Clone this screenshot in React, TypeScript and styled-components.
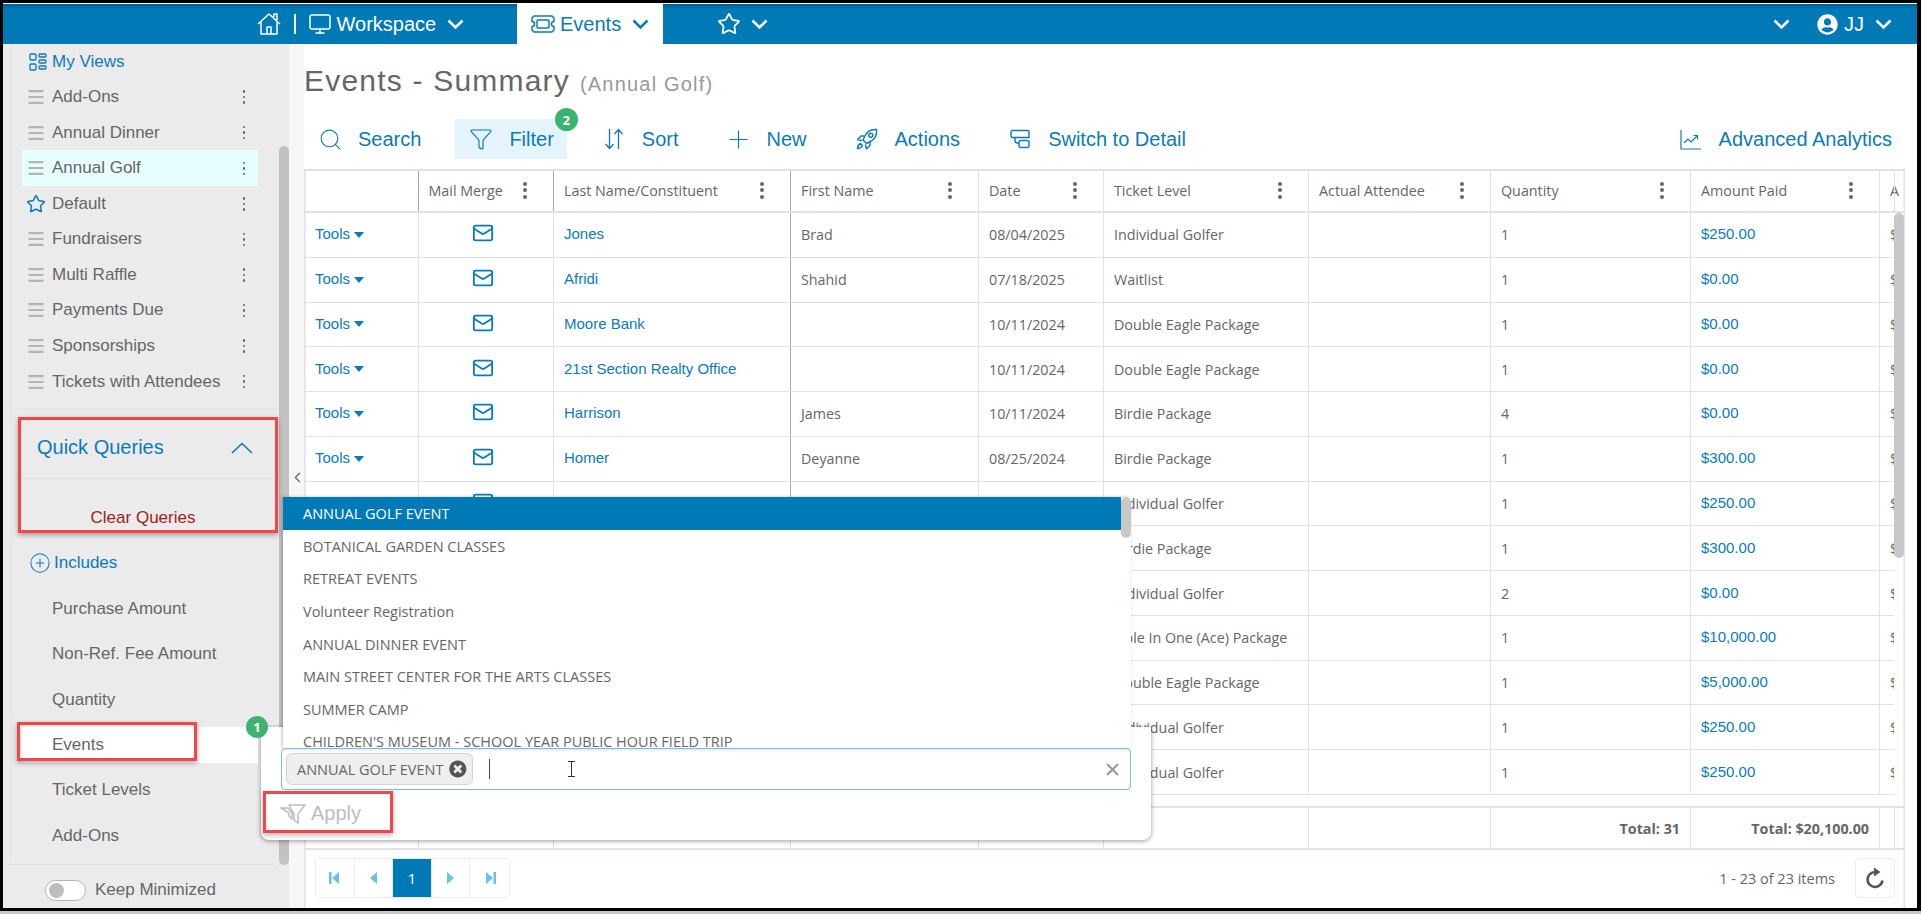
import React from 'react'
import styled, { createGlobalStyle } from 'styled-components'
import { Monitor, ChevronLeft, Star, Search, Funnel, Plus, Mail, X, CirclePlus, Menu } from 'lucide-react'
import { FaUserCircle, FaTimesCircle } from 'react-icons/fa'

const BLUE = '#0a7bb8'
const GRID = '#e1e2e8'
const COLUMNS = '113.5px 135.5px 237px 188px 125px 205px 182px 200px 189px 15px 1fr'

const GlobalStyle = createGlobalStyle`
  html, body { margin: 0; padding: 0; background: #fff; }
  * { box-sizing: border-box; }
  body { font-family: "Liberation Sans", Arial, sans-serif; color: #666; }
`

const Frame = styled('div')`
  background: #c8c8c8;
  height: 914px;
  padding-bottom: 3px;
  width: 1921px;
`

const Screen = styled('div')`
  background: #fff;
  border-bottom: 3px solid #000;
  border-left: 3px solid #000;
  border-right: 4px solid #000;
  border-top: 3px solid #000;
  display: flex;
  flex-direction: column;
  height: 911px;
  overflow: hidden;
  padding-top: 1px;
`

const TopBar = styled('header')`
  align-items: stretch;
  background: #007ab7;
  box-shadow: inset 0 4px 4px -3px rgba(0, 0, 0, .4);
  color: #fff;
  display: flex;
  flex: none;
  font-size: 20px;
  height: 40px;
`

const TopLeft = styled('div')`
  align-items: center;
  display: flex;
  padding-left: 254px;
  width: 514px;
`

const Divider = styled('span')`
  background: #fff;
  height: 20px;
  margin: 0 12px 0 13px;
  width: 1.5px;
`

const TopLabel = styled('span')`
  margin: 0 11px 0 5px;
`

const EventsTab = styled('div')`
  align-items: center;
  background: #fff;
  color: ${BLUE};
  display: flex;
  padding-left: 14px;
  width: 146px;
`

const FavGroup = styled('div')`
  align-items: center;
  display: flex;
  gap: 10px;
  margin-left: 54px;
`

const UserGroup = styled('div')`
  align-items: center;
  display: flex;
  margin-left: auto;
  padding-right: 25px;
`

const UserIcon = styled('span')`
  display: flex;
  margin-left: 27px;
`

const UserName = styled('span')`
  margin: 0 11px 0 6px;
`

const Body = styled('div')`
  display: flex;
  flex: 1;
  min-height: 0;
  position: relative;
`

const Sidebar = styled('aside')`
  background: #ebebeb;
  display: flex;
  flex-direction: column;
  flex: none;
  font-size: 17px;
  padding-left: 8px;
  position: relative;
  width: 276px;
`

const SideBorder = styled('div')`
  border-left: 1px solid #e2e2e2;
  height: 816px;
  padding-left: 10px;
`

const MyViews = styled('div')`
  align-items: center;
  color: ${BLUE};
  display: flex;
  font-size: 17px;
  gap: 5px;
  height: 34px;
  padding: 1px 0 0 7px;
`

const ViewsList = styled('div')`
  margin: 0 0 0 -11px;
  border-bottom: 1px solid #e2e2e2;
  padding: 1.4px 0 9.6px 11px;
`

const ViewRow = styled('div')<{ $active?: boolean }>`
  align-items: center;
  background: ${(props) => (props.$active ? '#e6ffff' : 'transparent')};
  display: flex;
  height: 35.56px;
  padding-left: 4px;
  width: 236px;
`

const RowLabel = styled('span')`
  flex: 1;
  margin-left: 6px;
  white-space: nowrap;
`

const DotsWrap = styled('span')`
  color: #666;
  display: flex;
  flex-direction: column;
  gap: 3px;
  margin-right: 13px;
`

const Dot = styled('i')<{ $size: number }>`
  background: currentColor;
  border-radius: 50%;
  display: block;
  height: ${(props) => props.$size}px;
  width: ${(props) => props.$size}px;
`

const HeadDots = styled(DotsWrap)`
  gap: 2.5px;
  margin: 0;
`

const QuickBox = styled('section')`
  border: 3px solid #f44649;
  box-shadow: 0 2px 5px rgba(0, 0, 0, .35);
  height: 116px;
  margin: 7px 0 0 -4px;
  width: 260px;
`

const QuickHead = styled('div')`
  align-items: center;
  border-bottom: 1px solid #e2e2e2;
  color: ${BLUE};
  display: flex;
  font-size: 20px;
  height: 59px;
  justify-content: space-between;
  padding: 0 22px 2px 16px;
`

const ClearQueries = styled('div')`
  color: #a01d22;
  margin-top: 29px;
  padding-right: 10px;
  text-align: center;
`

const Includes = styled('div')`
  align-items: center;
  color: ${BLUE};
  display: flex;
  font-size: 17px;
  gap: 3px;
  height: 40px;
  margin: 10px 0 8px;
  padding-left: 7px;
`

const QueryRow = styled('div')<{ $active?: boolean }>`
  align-items: center;
  background: ${(props) => (props.$active ? '#fff' : 'transparent')};
  display: flex;
  height: 36px;
  margin-bottom: 9.4px;
  padding-left: 30px;
  position: relative;
  width: 236px;
`

const EventsMark = styled('div')`
  border: 3px solid #f44649;
  box-shadow: 0 2px 5px rgba(0, 0, 0, .35);
  height: 39px;
  left: -5px;
  position: absolute;
  top: -5px;
  width: 180px;
`

const SideFooter = styled('div')`
  align-items: center;
  border-top: 1px solid #dedede;
  display: flex;
  flex: 1;
  gap: 9px;
  margin: 4px 5px 0 -3px;
  padding: 7px 0 0 37px;
`

const Toggle = styled('span')`
  align-items: center;
  background: #fff;
  border: 1px solid #b5b5b5;
  border-radius: 11px;
  display: flex;
  height: 21px;
  padding-left: 3px;
  width: 41px;
`

const Knob = styled('span')`
  background: #bdbdbd;
  border-radius: 50%;
  height: 15px;
  width: 15px;
`

const ScrollCol = styled('div')`
  background: #ebebeb;
  flex: none;
  padding-top: 102px;
  width: 10px;
`

const ScrollThumb = styled('div')<{ $height: number }>`
  background: #c2c2c2;
  border-radius: 5px;
  height: ${(props) => props.$height}px;
  width: 100%;
`

const Gutter = styled('div')`
  background: #f7f7f7;
  color: #666;
  flex: none;
  padding-top: 425px;
  width: 15px;
`

const Main = styled('main')`
  display: flex;
  flex: 1;
  flex-direction: column;
  min-width: 0;
  padding-right: 12px;
`

const TitleRow = styled('div')`
  align-items: baseline;
  display: flex;
  gap: 10px;
  height: 75px;
  padding-top: 20px;
`

const Title = styled('h1')`
  color: #666;
  font-size: 30px;
  font-weight: 400;
  letter-spacing: 1.2px;
  margin: 0;
`

const SubTitle = styled('span')`
  color: #999;
  font-size: 20px;
  letter-spacing: 1.2px;
`

const Toolbar = styled('div')`
  align-items: center;
  display: flex;
  gap: 21px;
  height: 40px;
`

const ToolButton = styled('div')<{ $active?: boolean; $end?: boolean }>`
  align-items: center;
  background: ${(props) => (props.$active ? '#e5f4fc' : 'transparent')};
  color: ${BLUE};
  display: flex;
  font-size: 20px;
  gap: 18px;
  height: 40px;
  margin-left: ${(props) => (props.$end ? 'auto' : '0')};
  padding: 0 13px 0 16px;
  position: relative;
  white-space: nowrap;
`

const ToolIcon = styled('span')`
  align-items: center;
  display: flex;
  height: 24px;
  justify-content: center;
  width: 20px;
  svg { flex: none; }
`

const Badge = styled('span')`
  align-items: center;
  background: #3cb371;
  border-radius: 50%;
  color: #fff;
  display: flex;
  font-family: "Open Sans", sans-serif;
  font-size: 13px;
  font-weight: 700;
  height: 23px;
  justify-content: center;
  position: absolute;
  width: 23px;
`

const FilterBadge = styled(Badge)`
  right: -11px;
  top: -11px;
`

const TableShell = styled('div')`
  box-shadow: inset 1.5px 0 0 ${GRID}, inset -1.5px 0 0 ${GRID};
  display: flex;
  flex: 1;
  flex-direction: column;
  margin-top: 10px;
`

const TableBox = styled('div')`
  border-top: 2px solid ${GRID};
  color: #666;
  display: flex;
  flex-direction: column;
  font-family: "Open Sans", sans-serif;
  font-size: 14.3px;
  height: 679px;
`

const HeadRow = styled('div')`
  border-bottom: 2px solid ${GRID};
  display: grid;
  flex: none;
  grid-template-columns: ${COLUMNS};
  height: 42px;
`

const HeadCell = styled('div')<{ $dark?: boolean }>`
  align-items: center;
  border-left: ${(props) => (props.$dark ? '1.5px solid #a9a9a9' : `1.5px solid ${GRID}`)};
  display: flex;
  justify-content: space-between;
  overflow: hidden;
  padding: 0 26px 2px 10px;
  white-space: nowrap;
`

const EndCell = styled('div')`
  border-left: 1.5px solid ${GRID};
`

const RowsArea = styled('div')`
  flex: none;
  height: 593px;
  position: relative;
`

const DataRow = styled('div')`
  border-bottom: 1.5px solid ${GRID};
  display: grid;
  grid-template-columns: ${COLUMNS};
  height: 44.77px;
  width: 1590px;
`

const Cell = styled('div')<{ $dark?: boolean }>`
  align-items: center;
  border-left: ${(props) => (props.$dark ? '1.5px solid #a9a9a9' : `1.5px solid ${GRID}`)};
  display: flex;
  overflow: hidden;
  padding-left: 10px;
  white-space: nowrap;
`

const LinkCell = styled(Cell)`
  color: ${BLUE};
  font-family: "Liberation Sans", Arial, sans-serif;
  font-size: 15px;
  padding-bottom: 2px;
`

const MailCell = styled(Cell)`
  justify-content: center;
  padding: 0 5px 3px 0;
`

const Caret = styled('i')`
  border-left: 5px solid transparent;
  border-right: 5px solid transparent;
  border-top: 6px solid ${BLUE};
  display: inline-block;
  margin: 2px 0 0 4px;
`

const TableThumb = styled('div')`
  background: #c8c8c8;
  border-radius: 5px;
  height: 345px;
  position: absolute;
  right: 1px;
  top: 0;
  width: 10px;
`

const FootRow = styled('div')`
  border-bottom: 2px solid ${GRID};
  border-top: 2px solid ${GRID};
  display: grid;
  flex: none;
  grid-template-columns: ${COLUMNS};
  height: 44px;
`

const FootCell = styled('div')`
  align-items: center;
  border-left: 1.5px solid ${GRID};
  display: flex;
  font-weight: 700;
  justify-content: flex-end;
  padding-right: 10px;
  white-space: nowrap;
`

const PagerBar = styled('div')`
  align-items: center;
  color: #666;
  display: flex;
  flex: 1;
  font-family: "Open Sans", sans-serif;
  font-size: 14.5px;
  padding: 0 10px 0 11px;
`

const Pager = styled('div')`
  border: 1px solid #ececec;
  border-radius: 4px;
  display: flex;
  height: 40px;
`

const PageButton = styled('span')<{ $current?: boolean }>`
  align-items: center;
  background: ${(props) => (props.$current ? '#007ab7' : '#fff')};
  border-right: 1px solid #ececec;
  color: ${(props) => (props.$current ? '#fff' : '#6cc0e8')};
  display: flex;
  justify-content: center;
  width: 38.6px;
  &:last-child { border-right: none; }
`

const ItemCount = styled('span')`
  margin-left: auto;
`

const RefreshButton = styled('span')`
  align-items: center;
  border: 1px solid #ececec;
  border-radius: 4px;
  display: flex;
  height: 40px;
  justify-content: center;
  margin-left: 20px;
  width: 40px;
`

const Popup = styled('div')`
  background: #fff;
  border-radius: 0 0 8px 8px;
  box-shadow: 0 1px 5px rgba(0, 0, 0, .4);
  font-family: "Open Sans", sans-serif;
  font-size: 14.5px;
  height: 113px;
  left: 258px;
  padding: 21px 0 0 20px;
  position: absolute;
  top: 683px;
  width: 890px;
  z-index: 5;
`

const PopupBadge = styled(Badge)`
  height: 22px;
  left: -15px;
  top: -11px;
  width: 22px;
`

const DropList = styled('div')`
  background: #fff;
  box-shadow: -1px 0 3px rgba(0, 0, 0, .25);
  height: 251px;
  left: 22px;
  overflow: hidden;
  position: absolute;
  top: -230px;
  width: 848px;
`

const DropItem = styled('div')<{ $selected?: boolean }>`
  align-items: center;
  background: ${(props) => (props.$selected ? '#007ab7' : 'transparent')};
  color: ${(props) => (props.$selected ? '#fff' : '#666')};
  display: flex;
  height: 32.6px;
  padding: 1px 0 0 20px;
  width: 838px;
  white-space: nowrap;
`

const DropThumb = styled('div')`
  background: #c8c8c8;
  border-radius: 5px;
  height: 41px;
  position: absolute;
  right: 0;
  top: 0;
  width: 10px;
`

const InputBox = styled('div')`
  align-items: center;
  background: #fff;
  border: 1px solid #7db9d9;
  border-radius: 4px;
  box-shadow: inset 0 3px 3px -2px rgba(0, 0, 0, .12);
  display: flex;
  height: 42px;
  padding: 0 8px 0 4px;
  position: relative;
  width: 850px;
`

const Chip = styled('span')`
  align-items: center;
  background: #efefef;
  border: 1px solid #d4d4d4;
  border-radius: 6px;
  display: flex;
  gap: 6px;
  height: 32px;
  padding: 0 5px 0 10px;
  white-space: nowrap;
  width: 187px;
`

const TextCaret = styled('i')`
  background: #444;
  height: 20px;
  margin-left: 16px;
  width: 1px;
`

const IBeam = styled('span')`
  display: flex;
  margin-left: 77px;
`

const ClearInput = styled('span')`
  color: #999;
  display: flex;
  margin-left: auto;
`

const ApplyBox = styled('div')`
  align-items: center;
  border: 3px solid #f44649;
  box-shadow: 0 2px 5px rgba(0, 0, 0, .3);
  color: #b9bdc5;
  display: flex;
  font-family: "Liberation Sans", Arial, sans-serif;
  font-size: 20px;
  gap: 5px;
  height: 42px;
  margin: 1px 0 0 -18px;
  padding: 3px 0 0 14px;
  width: 130px;
`

const views = ['Add-Ons', 'Annual Dinner', 'Annual Golf', 'Default', 'Fundraisers', 'Multi Raffle', 'Payments Due', 'Sponsorships', 'Tickets with Attendees']
const queries = ['Purchase Amount', 'Non-Ref. Fee Amount', 'Quantity', 'Events', 'Ticket Levels', 'Add-Ons']
const headers = ['Mail Merge', 'Last Name/Constituent', 'First Name', 'Date', 'Ticket Level', 'Actual Attendee', 'Quantity', 'Amount Paid']
const options = ['ANNUAL GOLF EVENT', 'BOTANICAL GARDEN CLASSES', 'RETREAT EVENTS', 'Volunteer Registration', 'ANNUAL DINNER EVENT', 'MAIN STREET CENTER FOR THE ARTS CLASSES', 'SUMMER CAMP', "CHILDREN'S MUSEUM - SCHOOL YEAR PUBLIC HOUR FIELD TRIP"]

const rows = [
  ['Jones', 'Brad', '08/04/2025', 'Individual Golfer', '1', '$250.00'],
  ['Afridi', 'Shahid', '07/18/2025', 'Waitlist', '1', '$0.00'],
  ['Moore Bank', '', '10/11/2024', 'Double Eagle Package', '1', '$0.00'],
  ['21st Section Realty Office', '', '10/11/2024', 'Double Eagle Package', '1', '$0.00'],
  ['Harrison', 'James', '10/11/2024', 'Birdie Package', '4', '$0.00'],
  ['Homer', 'Deyanne', '08/25/2024', 'Birdie Package', '1', '$300.00'],
  ['Roberts', '', '', 'Individual Golfer', '1', '$250.00'],
  ['', '', '', 'Birdie Package', '1', '$300.00'],
  ['', '', '', 'Individual Golfer', '2', '$0.00'],
  ['', '', '', 'Hole In One (Ace) Package', '1', '$10,000.00'],
  ['', '', '', 'Double Eagle Package', '1', '$5,000.00'],
  ['', '', '', 'Individual Golfer', '1', '$250.00'],
  ['', '', '', 'Individual Golfer', '1', '$250.00'],
]

const Dots = () => (
  <DotsWrap>
    <Dot $size={2.5} />
    <Dot $size={2.5} />
    <Dot $size={2.5} />
  </DotsWrap>
)

const NavChevron = () => (
  <svg width="17" height="11" viewBox="0 0 17 11" fill="none" stroke="currentColor" strokeWidth="2.6">
    <path d="M1.500 1.500 8.500 8.500l7-7" />
  </svg>
)

const HomeIcon = () => (
  <svg width="24" height="24" viewBox="0 0 24 24" fill="none" stroke="#fff" strokeWidth="1.5" strokeLinejoin="round">
    <path d="M1 12 12 2l11 10" />
    <path d="M4 10v12h16V10" />
    <path d="M10 22v-7h4v7" />
    <path d="M17 5V2h3v6" />
  </svg>
)

const TicketIcon = () => (
  <svg width="24" height="18" viewBox="0 0 24 18" fill="none" stroke={BLUE} strokeWidth="1.5" strokeLinejoin="round">
    <path d="M3 1h18l2 2v3.500a2.500 2.500 0 0 0 0 5V15l-2 2H3l-2-2v-3.500a2.500 2.500 0 0 0 0-5V3z" />
    <rect x="6" y="5" width="12" height="8" rx="1" />
  </svg>
)

const ViewsIcon = () => (
  <svg width="18" height="18" viewBox="0 0 18 18" fill="none" stroke={BLUE} strokeWidth="1.3">
    <rect x="1" y="1" width="6" height="6" rx="1" />
    <rect x="1" y="11" width="6" height="6" rx="1" />
    <rect x="10" y="1" width="7" height="3" rx="1" />
    <rect x="10" y="7" width="7" height="3" rx="1" />
    <rect x="10" y="13" width="7" height="3" rx="1" />
  </svg>
)

const CollapseIcon = () => (
  <svg width="22" height="12" viewBox="0 0 22 12" fill="none" stroke="currentColor" strokeWidth="1.6">
    <path d="M1 11 11 1.500 21 11" />
  </svg>
)

const SortIcon = () => (
  <svg width="20" height="22" viewBox="0 0 20 22" fill="none" stroke={BLUE} strokeWidth="1.3">
    <path d="M5.500 1v19M1.500 16l4 4.500 4-4.500" />
    <path d="M14.500 21V2M10.500 6l4-4.500 4 4.500" />
  </svg>
)

const RocketIcon = () => (
  <svg width="22" height="22" viewBox="0 0 22 22" fill="none" stroke={BLUE} strokeWidth="1.4" strokeLinejoin="round">
    <path d="M20.500 1.500c-5.500-.5-9.500 2-11.500 6.500l-2 4 3.500 3.500 4-2c4.500-2 6.500-6.500 6-12z" />
    <circle cx="14.800" cy="7.200" r="2" />
    <path d="M8.500 8H5L1.500 11.500l4.500 1.200" />
    <path d="M14 14v3.500L10.500 21l-1.200-4.500" />
    <path d="M4.500 15.500c-2 1-3 3-3 5 2 0 4-1 5-3z" />
  </svg>
)

const SwitchIcon = () => (
  <svg width="20" height="20" viewBox="0 0 20 20" fill="none" stroke={BLUE} strokeWidth="1.4">
    <path d="M5 8.500H2.500a1.500 1.500 0 0 1-1.500-1.500V3a1.500 1.500 0 0 1 1.500-1.500h15A1.500 1.500 0 0 1 19 3v5.500H5z" />
    <path d="M5 8.500v3a2.500 2.500 0 0 0 2.500 2.500H9" />
    <rect x="9" y="11.500" width="10" height="7" rx="2" />
  </svg>
)

const AnalyticsIcon = () => (
  <svg width="21" height="21" viewBox="0 0 21 21" fill="none" stroke={BLUE} strokeWidth="1.2">
    <path d="M1 1v19h20" />
    <path d="M4 14l4-4 3 3 6-6" />
    <path d="M13.500 6.500h4v4" />
  </svg>
)

const ApplyIcon = () => (
  <svg width="26" height="22" viewBox="0 0 26 22" fill="none" stroke="#b9bdc5" strokeWidth="1.5" strokeLinejoin="round">
    <path d="M9 2h16l-7 9v9l-4-3v-6z" />
    <path d="M1 5h7l4 5v6l-3-3v-3z" />
  </svg>
)

const RefreshIcon = () => (
  <svg width="22" height="24" viewBox="0 0 22 24" fill="none" stroke="#555" strokeWidth="2.6">
    <path d="M11 6a7.500 7.500 0 1 0 7.500 8.500" />
    <path d="M10 1.500 16.500 6 10 10.500z" fill="#555" stroke="none" />
  </svg>
)

const PageArrow = ({ dir, edge }: { dir: 'left' | 'right'; edge?: boolean }) => (
  <svg width="12" height="14" viewBox="0 0 12 14" fill="currentColor">
    {dir === 'left' ? <path d="M10 1v12L3 7z" /> : <path d="M2 1v12l7-6z" />}
    {edge && (dir === 'left' ? <rect x="0" y="1" width="2.500" height="12" /> : <rect x="9.500" y="1" width="2.500" height="12" />)}
  </svg>
)

const IBeamIcon = () => (
  <svg width="9" height="16" viewBox="0 0 9 16" fill="none" stroke="#333" strokeWidth="1">
    <path d="M1 .5h7M4.500 .5v15M1 15.500h7" />
  </svg>
)

export default function App() {
  return (
    <Frame>
      <GlobalStyle />
      <Screen>
        <TopBar>
          <TopLeft>
            <HomeIcon />
            <Divider />
            <Monitor size={24} strokeWidth={1.5} />
            <TopLabel>Workspace</TopLabel>
            <NavChevron />
          </TopLeft>
          <EventsTab>
            <TicketIcon />
            <TopLabel>Events</TopLabel>
            <NavChevron />
          </EventsTab>
          <FavGroup>
            <Star size={24} strokeWidth={1.8} />
            <NavChevron />
          </FavGroup>
          <UserGroup>
            <NavChevron />
            <UserIcon>
              <FaUserCircle size={21} />
            </UserIcon>
            <UserName>JJ</UserName>
            <NavChevron />
          </UserGroup>
        </TopBar>
        <Body>
          <Sidebar>
            <SideBorder>
              <MyViews>
                <ViewsIcon />
                My Views
              </MyViews>
              <ViewsList>
                {views.map((name) => (
                  <ViewRow key={name} $active={name === 'Annual Golf'}>
                    {name === 'Default' ? <Star size={20} color={BLUE} strokeWidth={1.8} /> : <Menu size={20} color="#b4b4b4" strokeWidth={2.2} absoluteStrokeWidth />}
                    <RowLabel>{name}</RowLabel>
                    <Dots />
                  </ViewRow>
                ))}
              </ViewsList>
              <QuickBox>
                <QuickHead>
                  Quick Queries
                  <CollapseIcon />
                </QuickHead>
                <ClearQueries>Clear Queries</ClearQueries>
              </QuickBox>
              <Includes>
                <CirclePlus size={22} strokeWidth={1.1} />
                Includes
              </Includes>
              {queries.map((name) => (
                <QueryRow key={name} $active={name === 'Events'}>
                  {name}
                  {name === 'Events' && <EventsMark />}
                </QueryRow>
              ))}
            </SideBorder>
            <SideFooter>
              <Toggle>
                <Knob />
              </Toggle>
              Keep Minimized
            </SideFooter>
          </Sidebar>
          <ScrollCol>
            <ScrollThumb $height={719} />
          </ScrollCol>
          <Gutter>
            <ChevronLeft size={17} strokeWidth={1.7} />
          </Gutter>
          <Main>
            <TitleRow>
              <Title>Events - Summary</Title>
              <SubTitle>(Annual Golf)</SubTitle>
            </TitleRow>
            <Toolbar>
              <ToolButton>
                <ToolIcon>
                  <Search size={25} strokeWidth={1.1} />
                </ToolIcon>
                Search
              </ToolButton>
              <ToolButton $active>
                <ToolIcon>
                  <Funnel size={24} strokeWidth={1.2} />
                </ToolIcon>
                Filter
                <FilterBadge>2</FilterBadge>
              </ToolButton>
              <ToolButton>
                <ToolIcon>
                  <SortIcon />
                </ToolIcon>
                Sort
              </ToolButton>
              <ToolButton>
                <ToolIcon>
                  <Plus size={29} strokeWidth={1} />
                </ToolIcon>
                New
              </ToolButton>
              <ToolButton>
                <ToolIcon>
                  <RocketIcon />
                </ToolIcon>
                Actions
              </ToolButton>
              <ToolButton>
                <ToolIcon>
                  <SwitchIcon />
                </ToolIcon>
                Switch to Detail
              </ToolButton>
              <ToolButton $end>
                <ToolIcon>
                  <AnalyticsIcon />
                </ToolIcon>
                Advanced Analytics
              </ToolButton>
            </Toolbar>
            <TableShell>
              <TableBox>
                <HeadRow>
                  <HeadCell />
                  {headers.map((name, i) => (
                    <HeadCell key={name} $dark={i < 3}>
                      {name}
                      <HeadDots>
                        <Dot $size={4} />
                        <Dot $size={4} />
                        <Dot $size={4} />
                      </HeadDots>
                    </HeadCell>
                  ))}
                  <HeadCell>A</HeadCell>
                  <EndCell />
                </HeadRow>
                <RowsArea>
                  {rows.map((row, i) => (
                    <DataRow key={i}>
                      <LinkCell>
                        Tools
                        <Caret />
                      </LinkCell>
                      <MailCell>
                        <Mail size={22} color={BLUE} strokeWidth={2} />
                      </MailCell>
                      <LinkCell>{row[0]}</LinkCell>
                      <Cell $dark>{row[1]}</Cell>
                      <Cell>{row[2]}</Cell>
                      <Cell>{row[3]}</Cell>
                      <Cell />
                      <Cell>{row[4]}</Cell>
                      <LinkCell>{row[5]}</LinkCell>
                      <Cell>$</Cell>
                    </DataRow>
                  ))}
                  <TableThumb />
                </RowsArea>
                <FootRow>
                  <FootCell />
                  <FootCell />
                  <FootCell />
                  <FootCell />
                  <FootCell />
                  <FootCell />
                  <FootCell />
                  <FootCell>Total: 31</FootCell>
                  <FootCell>Total: $20,100.00</FootCell>
                  <FootCell />
                  <EndCell />
                </FootRow>
              </TableBox>
              <PagerBar>
                <Pager>
                  <PageButton>
                    <PageArrow dir="left" edge />
                  </PageButton>
                  <PageButton>
                    <PageArrow dir="left" />
                  </PageButton>
                  <PageButton $current>1</PageButton>
                  <PageButton>
                    <PageArrow dir="right" />
                  </PageButton>
                  <PageButton>
                    <PageArrow dir="right" edge />
                  </PageButton>
                </Pager>
                <ItemCount>1 - 23 of 23 items</ItemCount>
                <RefreshButton>
                  <RefreshIcon />
                </RefreshButton>
              </PagerBar>
            </TableShell>
          </Main>
          <Popup>
            <PopupBadge>1</PopupBadge>
            <DropList>
              {options.map((name, i) => (
                <DropItem key={name} $selected={i === 0}>
                  {name}
                </DropItem>
              ))}
              <DropThumb />
            </DropList>
            <InputBox>
              <Chip>
                ANNUAL GOLF EVENT
                <FaTimesCircle size={18} color="#555" />
              </Chip>
              <TextCaret />
              <IBeam>
                <IBeamIcon />
              </IBeam>
              <ClearInput>
                <X size={19} strokeWidth={2.8} />
              </ClearInput>
            </InputBox>
            <ApplyBox>
              <ApplyIcon />
              Apply
            </ApplyBox>
          </Popup>
        </Body>
      </Screen>
    </Frame>
  )
}
